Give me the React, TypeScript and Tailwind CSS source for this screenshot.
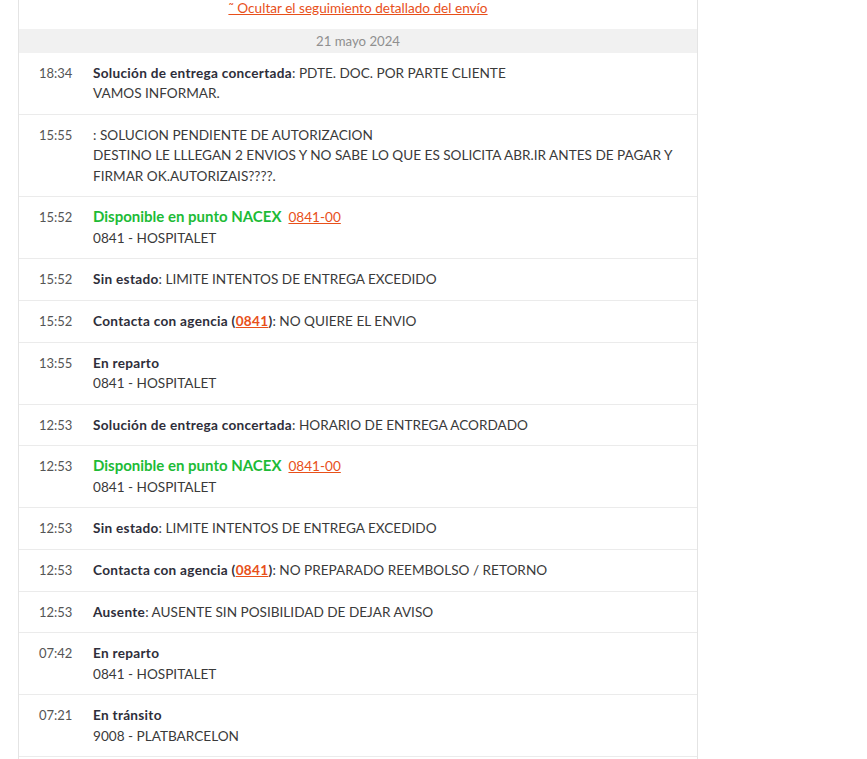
import React from "react";

type Row = { time: string; content: React.ReactNode; sub?: React.ReactNode };

const Link = ({ children, bold }: { children: React.ReactNode; bold?: boolean }) => (
  <span className={`text-[#e8501a] underline ${bold ? "font-bold tracking-[0.3px]" : ""}`}>{children}</span>
);

const B = ({ children }: { children: React.ReactNode }) => (
  <span className="font-bold tracking-[0.3px] text-[#2e2e3a]">{children}</span>
);

const G = ({ children }: { children: React.ReactNode }) => (
  <span className="font-bold text-[#1dbb36] text-[15px] leading-none">{children}</span>
);

const rows: Row[] = [
  { time: "18:34", content: <><B>Solución de entrega concertada</B>: PDTE. DOC. POR PARTE CLIENTE</>, sub: "VAMOS INFORMAR." },
  { time: "15:55", content: <>: SOLUCION PENDIENTE DE AUTORIZACION</>, sub: "DESTINO LE LLLEGAN 2 ENVIOS Y NO SABE LO QUE ES SOLICITA ABR.IR ANTES DE PAGAR Y FIRMAR OK.AUTORIZAIS????." },
  { time: "15:52", content: <><G>Disponible en punto NACEX</G>&nbsp;&nbsp;<Link>0841-00</Link></>, sub: "0841 - HOSPITALET" },
  { time: "15:52", content: <><B>Sin estado</B>: LIMITE INTENTOS DE ENTREGA EXCEDIDO</> },
  { time: "15:52", content: <><B>Contacta con agencia (</B><Link bold>0841</Link><B>)</B>: NO QUIERE EL ENVIO</> },
  { time: "13:55", content: <B>En reparto</B>, sub: "0841 - HOSPITALET" },
  { time: "12:53", content: <><B>Solución de entrega concertada</B>: HORARIO DE ENTREGA ACORDADO</> },
  { time: "12:53", content: <><G>Disponible en punto NACEX</G>&nbsp;&nbsp;<Link>0841-00</Link></>, sub: "0841 - HOSPITALET" },
  { time: "12:53", content: <><B>Sin estado</B>: LIMITE INTENTOS DE ENTREGA EXCEDIDO</> },
  { time: "12:53", content: <><B>Contacta con agencia (</B><Link bold>0841</Link><B>)</B>: NO PREPARADO REEMBOLSO / RETORNO</> },
  { time: "12:53", content: <><B>Ausente</B>: AUSENTE SIN POSIBILIDAD DE DEJAR AVISO</> },
  { time: "07:42", content: <B>En reparto</B>, sub: "0841 - HOSPITALET" },
  { time: "07:21", content: <B>En tránsito</B>, sub: "9008 - PLATBARCELON" },
];

export default function App() {
  return (
    <div className="h-[759px] overflow-hidden bg-white" style={{ fontFamily: "Lato, 'Noto Sans', sans-serif" }}>
      <div className="ml-[18px] min-h-[780px] w-[680px] border-x border-[#e4e4e4] text-[13.6px] leading-[20.33px] text-[#3a3a3a]">
        <div className="flex h-[29px] items-start justify-center">
          <span className="text-[#e8501a] underline leading-[17px]">˜ Ocultar el seguimiento detallado del envío</span>
        </div>
        <div className="flex h-[24px] items-center justify-center bg-[#f1f1f1] text-[13.2px] text-[#8f8f8f]">21 mayo 2024</div>
        {rows.map((r, i) => (
          <div key={i} className="flex border-b border-[#ebebeb] pt-[10px] pb-[10.33px] pl-[20px] pr-[16px]">
            <div className="w-[54px] shrink-0 text-[13px] text-[#555]">{r.time}</div>
            <div className="flex-1">
              <div className="h-[20.33px]">{r.content}</div>
              {r.sub && <div>{r.sub}</div>}
            </div>
          </div>
        ))}
      </div>
    </div>
  );
}
